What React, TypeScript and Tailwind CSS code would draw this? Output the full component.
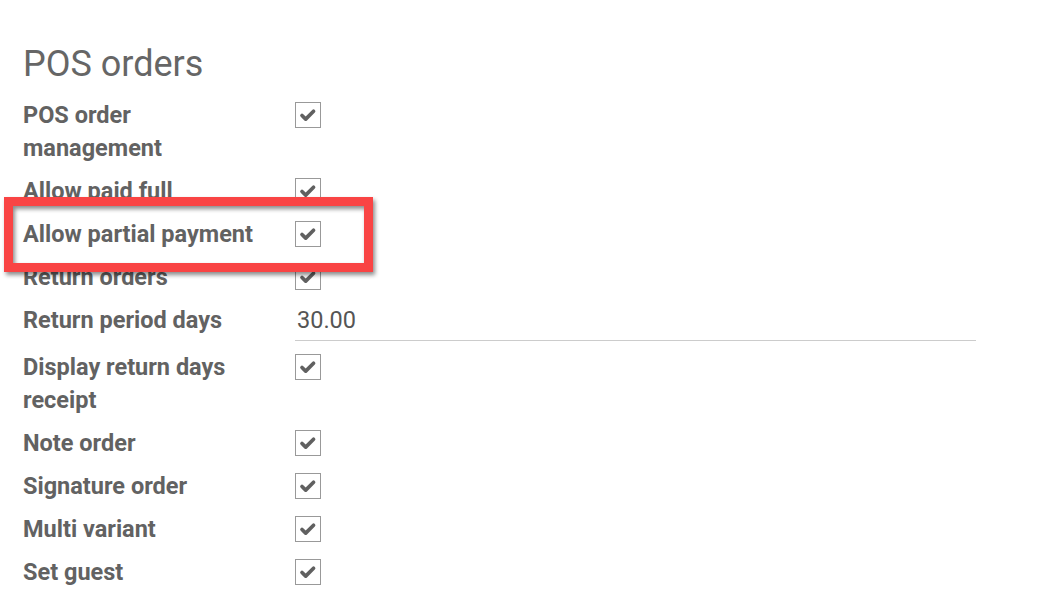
import React from "react";

function Check() {
  return (
    <div className="mt-[3px] flex h-[26px] w-[26px] shrink-0 items-center justify-center border border-[#999] bg-white">
      <svg width="26" height="26" viewBox="0 0 26 26">
        <polyline
          points="6.5,13.5 10.5,17.5 19,9"
          fill="none"
          stroke="#606060"
          strokeWidth="4"
          strokeLinecap="round"
          strokeLinejoin="round"
        />
      </svg>
    </div>
  );
}

function Row({ label, children }: { label: React.ReactNode; children: React.ReactNode }) {
  return (
    <div className="flex items-start">
      <div className="w-[272px] shrink-0 pr-4 text-[23.5px] font-bold leading-[33px] text-[#626262]">{label}</div>
      {children}
    </div>
  );
}

export default function App() {
  return (
    <div
      className="relative h-[602px] w-[1041px] overflow-hidden bg-white pl-[23px] pt-[42px]"
      style={{ fontFamily: "Roboto, 'Liberation Sans', sans-serif" }}
    >
      <h1 className="text-[36px] font-normal leading-[44px] text-[#666]">POS orders</h1>
      <div className="mt-[13px] flex flex-col gap-[10px]">
        <Row label={<>POS order<br />management</>}>
          <Check />
        </Row>
        <Row label="Allow paid full">
          <Check />
        </Row>
        <Row label="Allow partial payment">
          <Check />
        </Row>
        <Row label="Return orders">
          <Check />
        </Row>
        <Row label="Return period days">
          <div className="h-[37px] w-[681px] border-b border-[#ccc] pl-[2px] text-[23.5px] leading-[33px] text-[#555]">
            30.00
          </div>
        </Row>
        <Row label={<>Display return days<br />receipt</>}>
          <Check />
        </Row>
        <Row label="Note order">
          <Check />
        </Row>
        <Row label="Signature order">
          <Check />
        </Row>
        <Row label="Multi variant">
          <Check />
        </Row>
        <Row label="Set guest">
          <Check />
        </Row>
      </div>
      <div className="pointer-events-none absolute left-[4px] top-[197px] h-[75px] w-[369px] border-[9px] border-[#f94444] drop-shadow-[2px_3px_2px_rgba(0,0,0,0.45)]" />
    </div>
  );
}
